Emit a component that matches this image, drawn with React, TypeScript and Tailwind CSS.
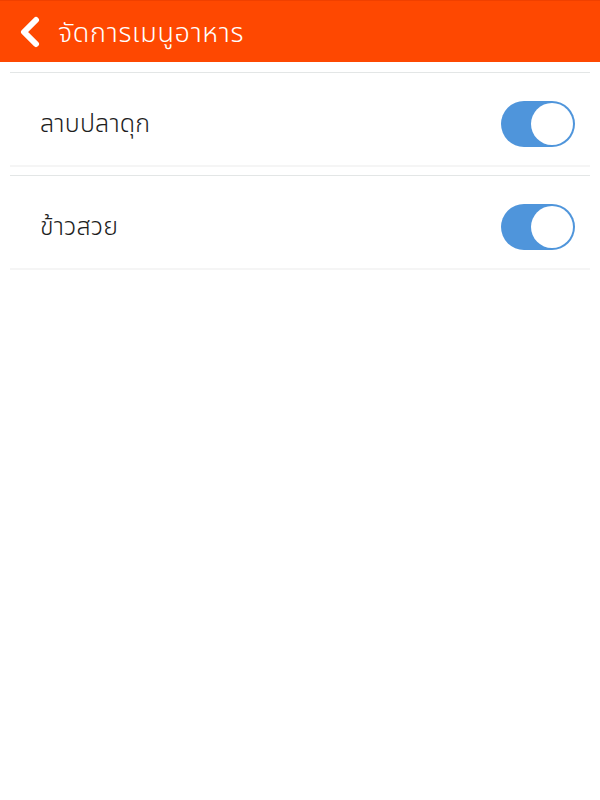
import React, { useState } from 'react';

const items = ['ลาบปลาดุก', 'ข้าวสวย'];

function Toggle({ on, onChange }: { on: boolean; onChange: () => void }) {
  return (
    <button
      onClick={onChange}
      className={`relative w-[74px] h-[46px] rounded-full transition-colors ${on ? 'bg-[#4f95db]' : 'bg-[#e5e5e5]'}`}
    >
      <span
        className={`absolute top-[2px] w-[42px] h-[42px] rounded-full bg-white transition-all ${on ? 'left-[30px]' : 'left-[2px] shadow'}`}
      />
    </button>
  );
}

export default function App() {
  const [state, setState] = useState<boolean[]>(items.map(() => true));

  return (
    <div className="w-[600px] h-[800px] bg-white font-['Noto_Sans','Noto_Sans_Thai',sans-serif]">
      {/* Header */}
      <div className="h-[62px] bg-[#fe4801] flex items-center border-t border-[#f04000]">
        <svg width="24" height="32" viewBox="0 0 24 32" className="ml-[18px]">
          <path d="M18 4 L6 16 L18 28" fill="none" stroke="white" strokeWidth="6" strokeLinecap="round" strokeLinejoin="round" />
        </svg>
        <h1 className="ml-[16px] text-white text-[27px] font-light tracking-[0.7px] leading-none">จัดการเมนูอาหาร</h1>
      </div>

      {/* List */}
      <div className="px-[10px] pt-[10px] flex flex-col gap-[8px]">
        {items.map((name, i) => (
          <div
            key={name}
            className="h-[95px] flex items-center justify-between pt-[10px] pl-[30px] pr-[15px] border-t border-[#e3e6e6] border-b-[2px] border-b-[#f5f5f5]"
          >
            <span className="text-[25px] font-light text-[#1e1e1e] leading-none mb-[4px] tracking-[0.2px]">{name}</span>
            <Toggle on={state[i]} onChange={() => setState(s => s.map((v, j) => (j === i ? !v : v)))} />
          </div>
        ))}
      </div>
    </div>
  );
}
